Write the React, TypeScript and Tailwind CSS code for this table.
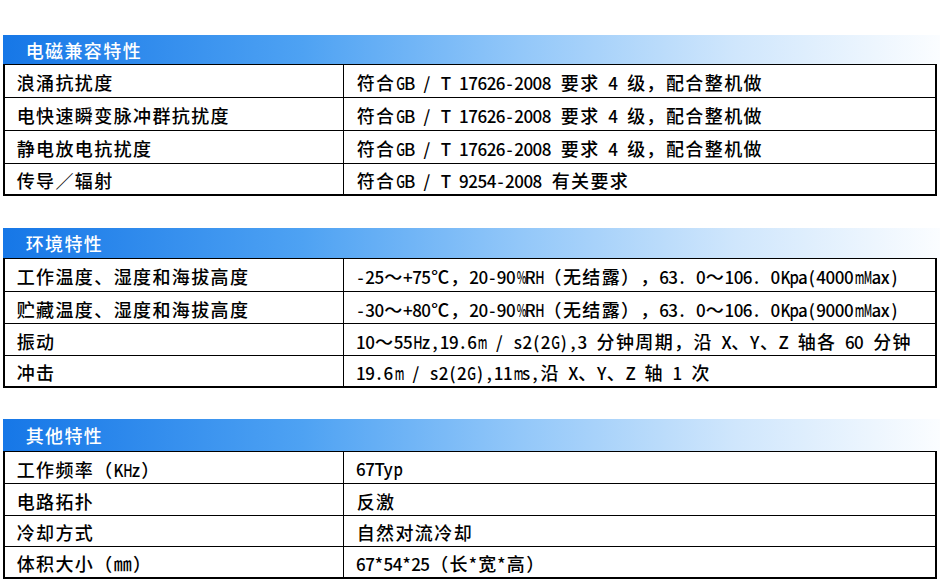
import React from "react";

const CJK = /[\u2100-\u214f\u3000-\u33ff\u3400-\u9fff\uff00-\uffef]/;

function Half({ ch }: { ch: string }) {
  if (ch === " ") return <span className="inline-block w-[9.2px]">{"\u00a0"}</span>;
  let cls = "inline-block w-[9.2px] text-center text-[17px]";
  if (ch === "m" || ch === "M" || ch === "%" || ch === "W") cls = "inline-block w-[9.2px] text-center text-[17px] scale-x-[0.6]";
  else if (ch === "H" || ch === "G") cls = "inline-block w-[9.2px] text-center text-[17px] scale-x-[0.74]";
  else if (ch === "K" || ch === "p") cls = "inline-block w-[9.2px] text-center text-[17px] scale-x-[0.88]";
  return <span className={cls}>{ch}</span>;
}

function Full({ ch }: { ch: string }) {
  return <span className="inline-block w-[19.4px] text-center text-[18px]">{ch}</span>;
}

function Txt({ t }: { t: string }) {
  return (
    <span className="whitespace-pre">
      {Array.from(t).map((ch, j) => (CJK.test(ch) ? <Full key={j} ch={ch} /> : <Half key={j} ch={ch} />))}
    </span>
  );
}

type Section = {
  title: string;
  rows: [string, string][];
  heights: string[];
  head: string;
  mt: string;
};

const sections: Section[] = [
  {
    title: "电磁兼容特性",
    rows: [
      ["浪涌抗扰度", "符合GB / T 17626-2008 要求 4 级，配合整机做"],
      ["电快速瞬变脉冲群抗扰度", "符合GB / T 17626-2008 要求 4 级，配合整机做"],
      ["静电放电抗扰度", "符合GB / T 17626-2008 要求 4 级，配合整机做"],
      ["传导／辐射", "符合GB / T 9254-2008 有关要求"],
    ],
    heights: ["h-[32px]", "h-[33px]", "h-[33px]", "h-[31px]"],
    head: "h-[29px]",
    mt: "mt-[35px]",
  },
  {
    title: "环境特性",
    rows: [
      ["工作温度、湿度和海拔高度", "-25～+75℃，20-90%RH（无结露），63. 0～106. 0Kpa(4000mMax)"],
      ["贮藏温度、湿度和海拔高度", "-30～+80℃，20-90%RH（无结露），63. 0～106. 0Kpa(9000mMax)"],
      ["振动", "10～55Hz,19.6m / s2(2G),3 分钟周期，沿 X、Y、Z 轴各 60 分钟"],
      ["冲击", "19.6m / s2(2G),11ms,沿 X、Y、Z 轴 1 次"],
    ],
    heights: ["h-[32px]", "h-[32px]", "h-[32px]", "h-[31px]"],
    head: "h-[30px]",
    mt: "mt-[32px]",
  },
  {
    title: "其他特性",
    rows: [
      ["工作频率（KHz）", "67Typ"],
      ["电路拓扑", "反激"],
      ["冷却方式", "自然对流冷却"],
      ["体积大小（㎜）", "67*54*25（长*宽*高）"],
    ],
    heights: ["h-[31px]", "h-[32px]", "h-[31px]", "h-[31px]"],
    head: "h-[32px]",
    mt: "mt-[31px]",
  },
];

export default function App() {
  return (
    <div
      className="w-[940px] h-[582px] bg-white overflow-hidden text-black font-medium [text-spacing-trim:space-all]"
      style={{ fontFamily: '"Noto Sans CJK SC", "Noto Sans", sans-serif' }}
    >
      <div className="flex flex-col pl-[3px]">
        {sections.map((s, si) => (
          <div key={si} className={`flex flex-col ${s.mt}`}>
            <div
              className={`${s.head} w-[937px] flex items-center pl-[22px] text-white leading-none bg-[linear-gradient(to_right,#1677e7_0%,#4ea2f3_32%,#92c7f9_55%,#cfe6fc_78%,#fbfdff_100%)]`}
            >
              <Txt t={s.title} />
            </div>
            <div className="w-[934px] border-2 border-black border-t">
              {s.rows.map((r, ri) => (
                <div
                  key={ri}
                  className={`grid grid-cols-[339px_1fr] ${s.heights[ri]} ${ri > 0 ? "border-t border-black" : ""}`}
                >
                  <div className="flex items-center pl-[11px] pt-[2px] border-r border-black leading-none">
                    <Txt t={r[0]} />
                  </div>
                  <div className="flex items-center pl-[12px] pt-[2px] leading-none whitespace-nowrap">
                    <Txt t={r[1]} />
                  </div>
                </div>
              ))}
            </div>
          </div>
        ))}
      </div>
    </div>
  );
}
